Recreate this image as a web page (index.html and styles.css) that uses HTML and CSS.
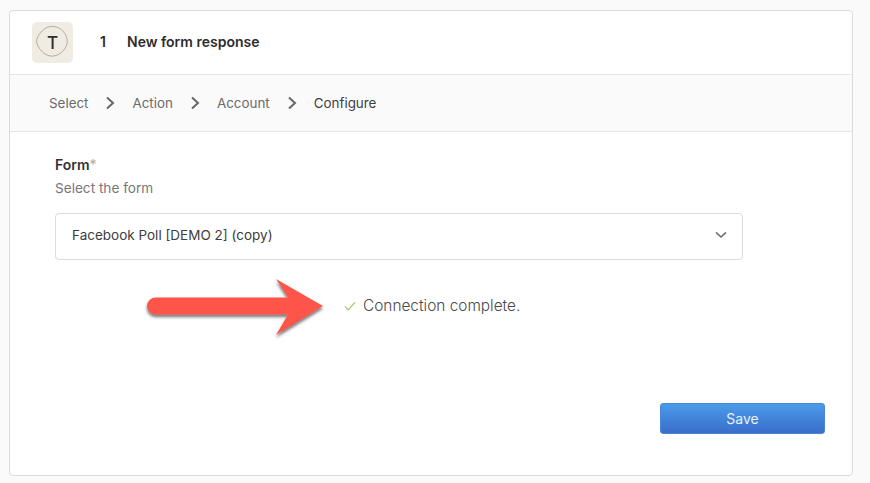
FILE: index.html
```html
<!DOCTYPE html>
<html lang="en">
<head>
<meta charset="utf-8">
<title>Configure</title>
<link rel="stylesheet" href="styles.css">
</head>
<body>
<main class="card">
  <header class="head">
    <div class="logo">
      <svg width="34" height="34" viewBox="0 0 32 32" class="blob"><path d="M12 2.100C17 .5 22.500 1.800 26 5.400c3.600 3.800 5.200 8.800 3.800 13.200-1.300 4.200-5 8.400-9.800 10-4.800 1.600-9.200.2-12.600-2.800C4 22.600 1.400 18.400 1.600 14.600 1.900 10.600 6.800 3.800 12 2.100Z" fill="none" stroke="#9a968a" stroke-width=".7"/></svg>
      <span class="logo-t">T</span>
    </div>
    <span class="num">1</span>
    <span class="title">New form response</span>
  </header>
  <nav class="crumbs">
    <span>Select</span>
    <svg class="sep" width="10" height="14" viewBox="0 0 10 14"><path d="M2 1.500 8 7l-6 5.500" fill="none" stroke="#666" stroke-width="2"/></svg>
    <span>Action</span>
    <svg class="sep" width="10" height="14" viewBox="0 0 10 14"><path d="M2 1.500 8 7l-6 5.500" fill="none" stroke="#666" stroke-width="2"/></svg>
    <span>Account</span>
    <svg class="sep" width="10" height="14" viewBox="0 0 10 14"><path d="M2 1.500 8 7l-6 5.500" fill="none" stroke="#666" stroke-width="2"/></svg>
    <span class="current">Configure</span>
  </nav>
  <section class="body">
    <div class="label">Form<span class="req">*</span></div>
    <div class="hint">Select the form</div>
    <div class="select">
      <span>Facebook Poll [DEMO 2] (copy)</span>
      <svg width="12" height="8" viewBox="0 0 12 8"><path d="M1 1.300 6 6l5-4.700" fill="none" stroke="#6f6f6f" stroke-width="1.600"/></svg>
    </div>
    <div class="status">
      <svg width="12" height="10" viewBox="0 0 14 11"><path d="M1 6l4 4 8-9" fill="none" stroke="#9ccc65" stroke-width="1.400"/></svg>
      <span>Connection complete.</span>
    </div>
    <div class="actions"><button class="save" type="button">Save</button></div>
  </section>
  <svg class="arrow" width="192" height="72" viewBox="0 0 192 72">
    <defs><filter id="sh" x="-10%" y="-20%" width="120%" height="150%"><feDropShadow dx="0" dy="2.500" stdDeviation="1.500" flood-color="#000" flood-opacity=".55"/></filter></defs>
    <path d="M15.500 25.500H148L136 7l47 27-47 29 12-20.500H15.500a8.500 8.500 0 0 1 0-17Z" fill="#fd5549" filter="url(#sh)"/>
  </svg>
</main>
</body>
</html>
```

FILE: styles.css
```css
* { box-sizing: border-box; }
html, body { margin: 0; height: 100%; }
body {
  background: #fafafa;
  padding: 10px 17px 7px 9px;
  font-family: Inter, "Liberation Sans", sans-serif;
  color: #3d3d3d;
}
.card {
  position: relative;
  height: 466px;
  background: #fff;
  border: 1px solid #dcdcdc;
  border-radius: 4px;
  display: flex;
  flex-direction: column;
}
.head {
  height: 64px;
  flex: none;
  display: flex;
  align-items: center;
  padding-left: 22px;
  border-bottom: 1px solid #e3e5e8;
}
.logo {
  position: relative;
  width: 41px;
  height: 41px;
  border-radius: 5px;
  background: #f1ece3;
  display: flex;
  align-items: center;
  justify-content: center;
}
.blob { position: absolute; left: 3px; top: 3px; }
.logo-t { position: relative; font-size: 17px; font-weight: 500; color: #2f2f2f; }
.num { margin: 0 0 3px 27px; width: 27px; font-size: 14px; font-weight: 600; color: #2c2c2c; }
.title { margin-bottom: 3px; font-size: 14px; font-weight: 600; color: #2c2c2c; }
.crumbs {
  height: 57px;
  flex: none;
  display: flex;
  align-items: center;
  padding-left: 39px;
  background: #fafafa;
  border-bottom: 1px solid #e3e5e8;
  font-size: 13.4px;
  color: #6b6b6b;
}
.sep { margin: 0 17px; }
.current { color: #3f3f3f; }
.body { flex: 1; padding: 24px 0 0 45px; display: flex; flex-direction: column; }
.label { font-size: 14px; font-weight: 600; line-height: 17px; color: #333; }
.req { color: #aaa; font-weight: 400; }
.hint { margin-top: 7px; font-size: 13.6px; line-height: 17px; color: #777; }
.select {
  margin-top: 16px;
  width: 688px;
  height: 47px;
  border: 1px solid #dcdcdc;
  border-radius: 4px;
  display: flex;
  align-items: center;
  justify-content: space-between;
  padding: 0 15px 3px 16px;
  font-size: 13.5px;
  color: #3d3d3d;
}
.status {
  margin: 36px 0 0 289px;
  display: flex;
  align-items: center;
  gap: 7px;
  font-size: 15.4px;
  line-height: 20px;
  font-weight: 300;
  color: #4a4a4a;
}
.actions { display: flex; justify-content: flex-end; margin-top: 87px; padding-right: 27px; }
.save {
  width: 165px;
  height: 31px;
  border: 1px solid #4a86d8;
  border-radius: 3px;
  background: linear-gradient(#4a9aea, #3a6fcb);
  color: #e8f1fc;
  font: 14px Inter, "Liberation Sans", sans-serif;
}
.arrow { position: absolute; left: 130px; top: 261px; }
```
